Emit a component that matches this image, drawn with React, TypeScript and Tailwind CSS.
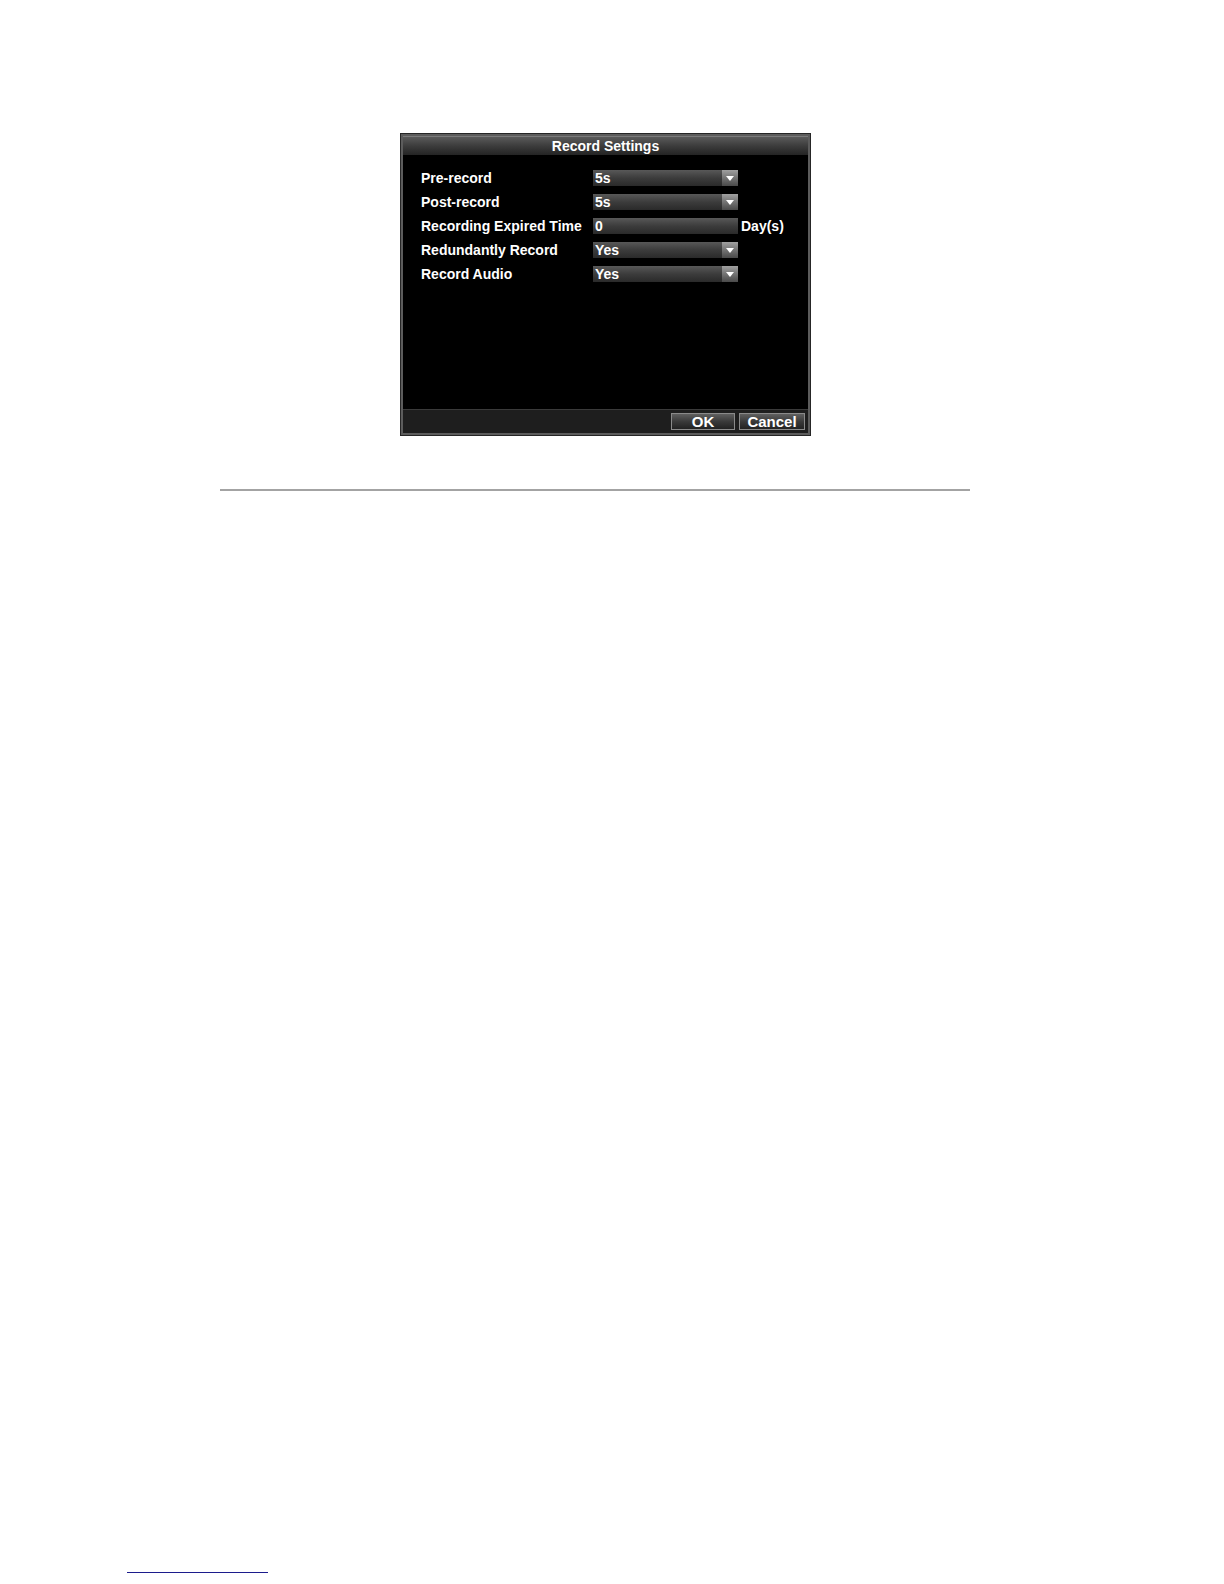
import React from 'react';

const font = { fontFamily: '"Liberation Sans", Arial, sans-serif' };

type Row = { label: string; value: string; kind: 'select' | 'text'; suffix?: string };

const rows: Row[] = [
  { label: 'Pre-record', value: '5s', kind: 'select' },
  { label: 'Post-record', value: '5s', kind: 'select' },
  { label: 'Recording Expired Time', value: '0', kind: 'text', suffix: 'Day(s)' },
  { label: 'Redundantly Record', value: 'Yes', kind: 'select' },
  { label: 'Record Audio', value: 'Yes', kind: 'select' },
];

function Field({ row }: { row: Row }) {
  return (
    <div className="flex h-[16px] w-[145px] bg-gradient-to-b from-[#585858] via-[#3c3c3c] to-[#2a2a2a]">
      <span className="flex-1 pl-[2px] text-[14px] leading-[17px] text-white font-bold">{row.value}</span>
      {row.kind === 'select' && (
        <span className="flex w-[16px] items-center justify-center bg-gradient-to-b from-[#a0a0a0] to-[#4a4a4a]">
          <svg width="10" height="7" viewBox="0 0 10 7">
            <path d="M1 1 L9 1 L5 6 Z" fill="#ffffff" />
          </svg>
        </span>
      )}
    </div>
  );
}

function Button({ label, w }: { label: string; w: string }) {
  return (
    <button
      className={`${w} h-[17px] border border-[#8a8a8a] bg-gradient-to-b from-[#606060] via-[#3a3a3a] to-[#222] text-[15px] leading-[15px] font-bold text-white`}
    >
      {label}
    </button>
  );
}

export default function App() {
  return (
    <div className="h-[1584px] overflow-hidden bg-white pt-[133px]" style={font}>
      <div className="ml-[400px] w-[411px] border border-[#262626] bg-[#5c5c5c] p-[2px]">
        <div className="flex h-[19px] items-center justify-center bg-gradient-to-b from-[#5a5a5a] via-[#3c3c3c] to-[#242424] border-t border-[#7a7a7a]">
          <span className="text-[14px] font-bold text-white">Record Settings</span>
        </div>
        <div className="h-[254px] bg-black pl-[18px] pt-[15px]">
          <div className="flex flex-col gap-[8px]">
            {rows.map((r) => (
              <div key={r.label} className="flex h-[16px] items-center">
                <span className="w-[172px] text-[14px] font-bold leading-[16px] text-white">{r.label}</span>
                <Field row={r} />
                {r.suffix && <span className="ml-[3px] text-[14px] font-bold text-white">{r.suffix}</span>}
              </div>
            ))}
          </div>
        </div>
        <div className="flex h-[24px] items-center justify-end gap-[4px] border-t border-[#3a3a3a] bg-[#1e1e1e] pr-[3px]">
          <Button label="OK" w="w-[64px]" />
          <Button label="Cancel" w="w-[66px]" />
        </div>
      </div>
      <div className="ml-[220px] mt-[53px] h-[2px] w-[750px] bg-[#a3a3a3]" />
      <div className="ml-[127px] mt-[1081px] h-[1px] w-[141px] bg-[#1c1c8c]" />
    </div>
  );
}
